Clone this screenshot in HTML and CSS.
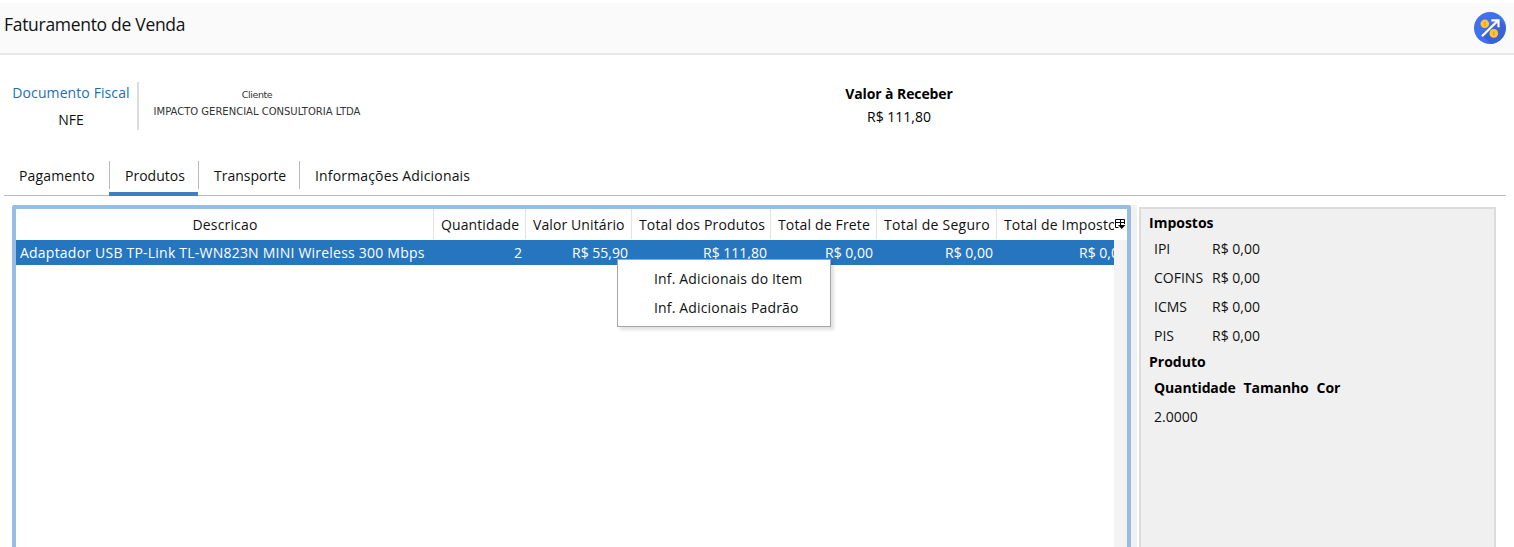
FILE: index.html
```html
<!DOCTYPE html>
<html lang="pt-BR">
<head>
<meta charset="utf-8">
<title>Faturamento de Venda</title>
<link rel="stylesheet" href="styles.css">
</head>
<body>
<header class="topbar">
  <h1 class="title"><span>Faturamento de Venda</span></h1>
  <svg class="logo" viewBox="0 0 32 32" width="32" height="32">
    <circle cx="16" cy="16" r="16" fill="#4070ee"/>
    <path d="M25.7 8 L31.2 13 A16 16 0 0 1 17 32 L8 24 Z" fill="#3a62d6"/>
    <circle cx="10.8" cy="11.8" r="4.3" fill="#ffc62e"/>
    <circle cx="19.8" cy="21.4" r="4.3" fill="#ffc62e"/>
    <path d="M11.8 10.4H10V11.8H11.6V13.2H9.8M10.8 9.5V14.1" fill="none" stroke="#ea9a20" stroke-width=".6"/>
    <path d="M20.8 20H19V21.4H20.6V22.8H18.8M19.8 19.1V23.7" fill="none" stroke="#ea9a20" stroke-width=".6"/>
    <path d="M8 24.2 L23.8 8.8" stroke="#fff" stroke-width="2.3"/>
    <path d="M17.3 8.3 H24.5 V15.3" fill="none" stroke="#fff" stroke-width="2.2"/>
  </svg>
</header>

<section class="summary">
  <div class="doc"><span class="doc-label">Documento Fiscal</span><span class="doc-value">NFE</span></div>
  <div class="client"><span class="client-label">Cliente</span><span class="client-name">IMPACTO GERENCIAL CONSULTORIA LTDA</span></div>
  <div class="due"><strong>Valor à Receber</strong><span>R$ 111,80</span></div>
</section>

<nav class="tabs">
  <span class="tab tab-payment">Pagamento</span>
  <span class="tab tab-products">Produtos</span>
  <span class="tab tab-shipping">Transporte</span>
  <span class="tab tab-info">Informações Adicionais</span>
</nav>

<main class="content">
  <div class="table-frame">
    <div class="head-line">
      <div class="grid head">
        <span class="h-desc">Descricao</span><span class="h-qty">Quantidade</span><span class="h-unit">Valor Unitário</span><span>Total dos Produtos</span><span>Total de Frete</span><span class="h-seguro">Total de Seguro</span><span>Total de Impostos</span>
      </div>
      <svg class="picker" width="13" height="32" viewBox="0 0 13 32">
        <path d="M4.5 18.5H1.5V10.5H10.5V15M1.5 13.5H10.5M6.5 10.5V17" fill="none" stroke="#000"/>
        <path d="M4 16H11.5L7.7 20Z" fill="#000"/>
      </svg>
    </div>
    <div class="body-line">
      <div class="rows">
        <div class="grid row">
          <span class="desc">Adaptador USB TP-Link TL-WN823N MINI Wireless 300 Mbps</span><span>2</span><span>R$ 55,90</span><span>R$ 111,80</span><span>R$ 0,00</span><span>R$ 0,00</span><span class="last">R$ 0,00</span>
        </div>
      </div>
      <div class="scroll"></div>
    </div>
    <div class="menu"><span>Inf. Adicionais do Item</span><span>Inf. Adicionais Padrão</span></div>
  </div>
  <div class="splitter"></div>
  <aside class="panel">
    <h2>Impostos</h2>
    <dl class="taxes">
      <dt>IPI</dt><dd>R$ 0,00</dd>
      <dt>COFINS</dt><dd>R$ 0,00</dd>
      <dt>ICMS</dt><dd>R$ 0,00</dd>
      <dt>PIS</dt><dd>R$ 0,00</dd>
    </dl>
    <h2>Produto</h2>
    <div class="variants"><b>Quantidade</b><b>Tamanho</b><b>Cor</b></div>
    <div class="amount">2.0000</div>
  </aside>
</main>
</body>
</html>
```
FILE: styles.css
```css
* { box-sizing: border-box; }
body {
  margin: 0;
  height: 547px;
  overflow: hidden;
  background: #fff;
  color: #111;
  font: 14px/20px "Open Sans", "Noto Sans", sans-serif;
  white-space: nowrap;
}
.topbar {
  height: 52px;
  margin-top: 3px;
  padding: 0 8px 0 4px;
  display: flex;
  justify-content: space-between;
  align-items: center;
  background: #fafafa;
  border-bottom: 2px solid #e8e8e8;
}
.title { margin: 0 0 8px; font-size: 17.5px; line-height: 24px; font-weight: 400; letter-spacing: -.3px; }
.logo { display: block; }

.summary { display: flex; height: 106px; padding-top: 27px; align-items: flex-start; }
.doc {
  display: flex;
  flex-direction: column;
  align-items: center;
  gap: 7px;
  width: 139px;
  height: 48px;
  padding: 1px 0 0 5px;
  border-right: 2px solid #ddd;
}
.doc-label { color: #1b6fb3; letter-spacing: .1px; }
.client {
  display: flex;
  flex-direction: column;
  align-items: center;
  width: 236px;
  padding-top: 4px;
  color: #333;
  font: 10px/17px "DejaVu Sans", sans-serif;
}
.client-label { font-size: 9.5px; letter-spacing: -.4px; }
.due { display: flex; flex-direction: column; align-items: center; margin-left: 454px; width: 140px; gap: 3px; padding-top: 2px; color: #000; }
.due strong { letter-spacing: -.1px; }

.tabs { display: flex; height: 35px; margin: 0 8px 0 4px; border-bottom: 1px solid #bbb; letter-spacing: .16px; }
.tab { position: relative; height: 35px; padding: 5px 0 0 15px; }
.tab + .tab::before { content: ""; position: absolute; left: 0; top: 0; width: 1px; height: 28px; background: #bbb; }
.tab-payment { width: 105px; }
.tab-products { width: 89px; padding-left: 16px; letter-spacing: 0; border-bottom: 4px solid #3d7fc1; }
.tab-shipping { width: 101px; padding-left: 16px; letter-spacing: 0; }
.tab-info { padding-left: 16px; }

.content { display: flex; margin: 9px 18px 0 12px; height: 342px; }
.table-frame { position: relative; width: 1119px; height: 360px; border: 4px solid #98bde5; border-radius: 2px; }
.head-line { display: flex; height: 31px; }
.grid {
  display: grid;
  grid-template-columns: 418px 92px 106px 139px 106px 120px 134px;
  width: 1098px;
  overflow: hidden;
}
.head { letter-spacing: .16px; }
.head span { padding: 6px 0 0 7px; border-right: 1px solid #e3e3e3; height: 30px; }
.head .h-desc { padding-left: 1px; text-align: center; }
.head .h-qty { letter-spacing: .1px; }
.head .h-unit { letter-spacing: .1px; }
.head .h-seguro { letter-spacing: .26px; }
.picker { display: block; }
.body-line { display: flex; height: 320px; }
.rows { width: 1098px; }
.row { height: 25px; background: #2675bf; color: #fff; line-height: 25px; text-align: right; }
.row span { padding-right: 4px; }
.row .desc { text-align: left; padding: 0 0 0 4px; letter-spacing: .22px; }
.row .last { padding-right: 4px; }
.scroll { width: 13px; background: #f4f4f4; }
.menu {
  position: absolute;
  left: 601px;
  top: 50px;
  width: 214px;
  height: 68px;
  padding: 4px 0 0 36px;
  display: flex;
  flex-direction: column;
  line-height: 29px;
  letter-spacing: .16px;
  background: #fff;
  border: 1px solid #a5a5a5;
  box-shadow: 3px 3px 3px rgba(0, 0, 0, .12);
}
.splitter { width: 6px; background: #f2f2f2; }
.panel { width: 357px; height: 360px; margin: 2px 0 0 2px; padding: 4px 0 0 8px; background: #f0f0f0; border: 2px solid #dcdcdc; }
.panel h2 { margin: 0; font-size: 14px; line-height: 20px; color: #000; }
.taxes { display: grid; grid-template-columns: 58px auto; margin: 0; padding: 1px 0 2px 5px; line-height: 29px; }
.taxes dd { margin: 0; }
.variants { display: flex; gap: 8px; padding: 6px 0 0 5px; color: #000; letter-spacing: -.12px; }
.amount { padding: 9px 0 0 5px; }
```
